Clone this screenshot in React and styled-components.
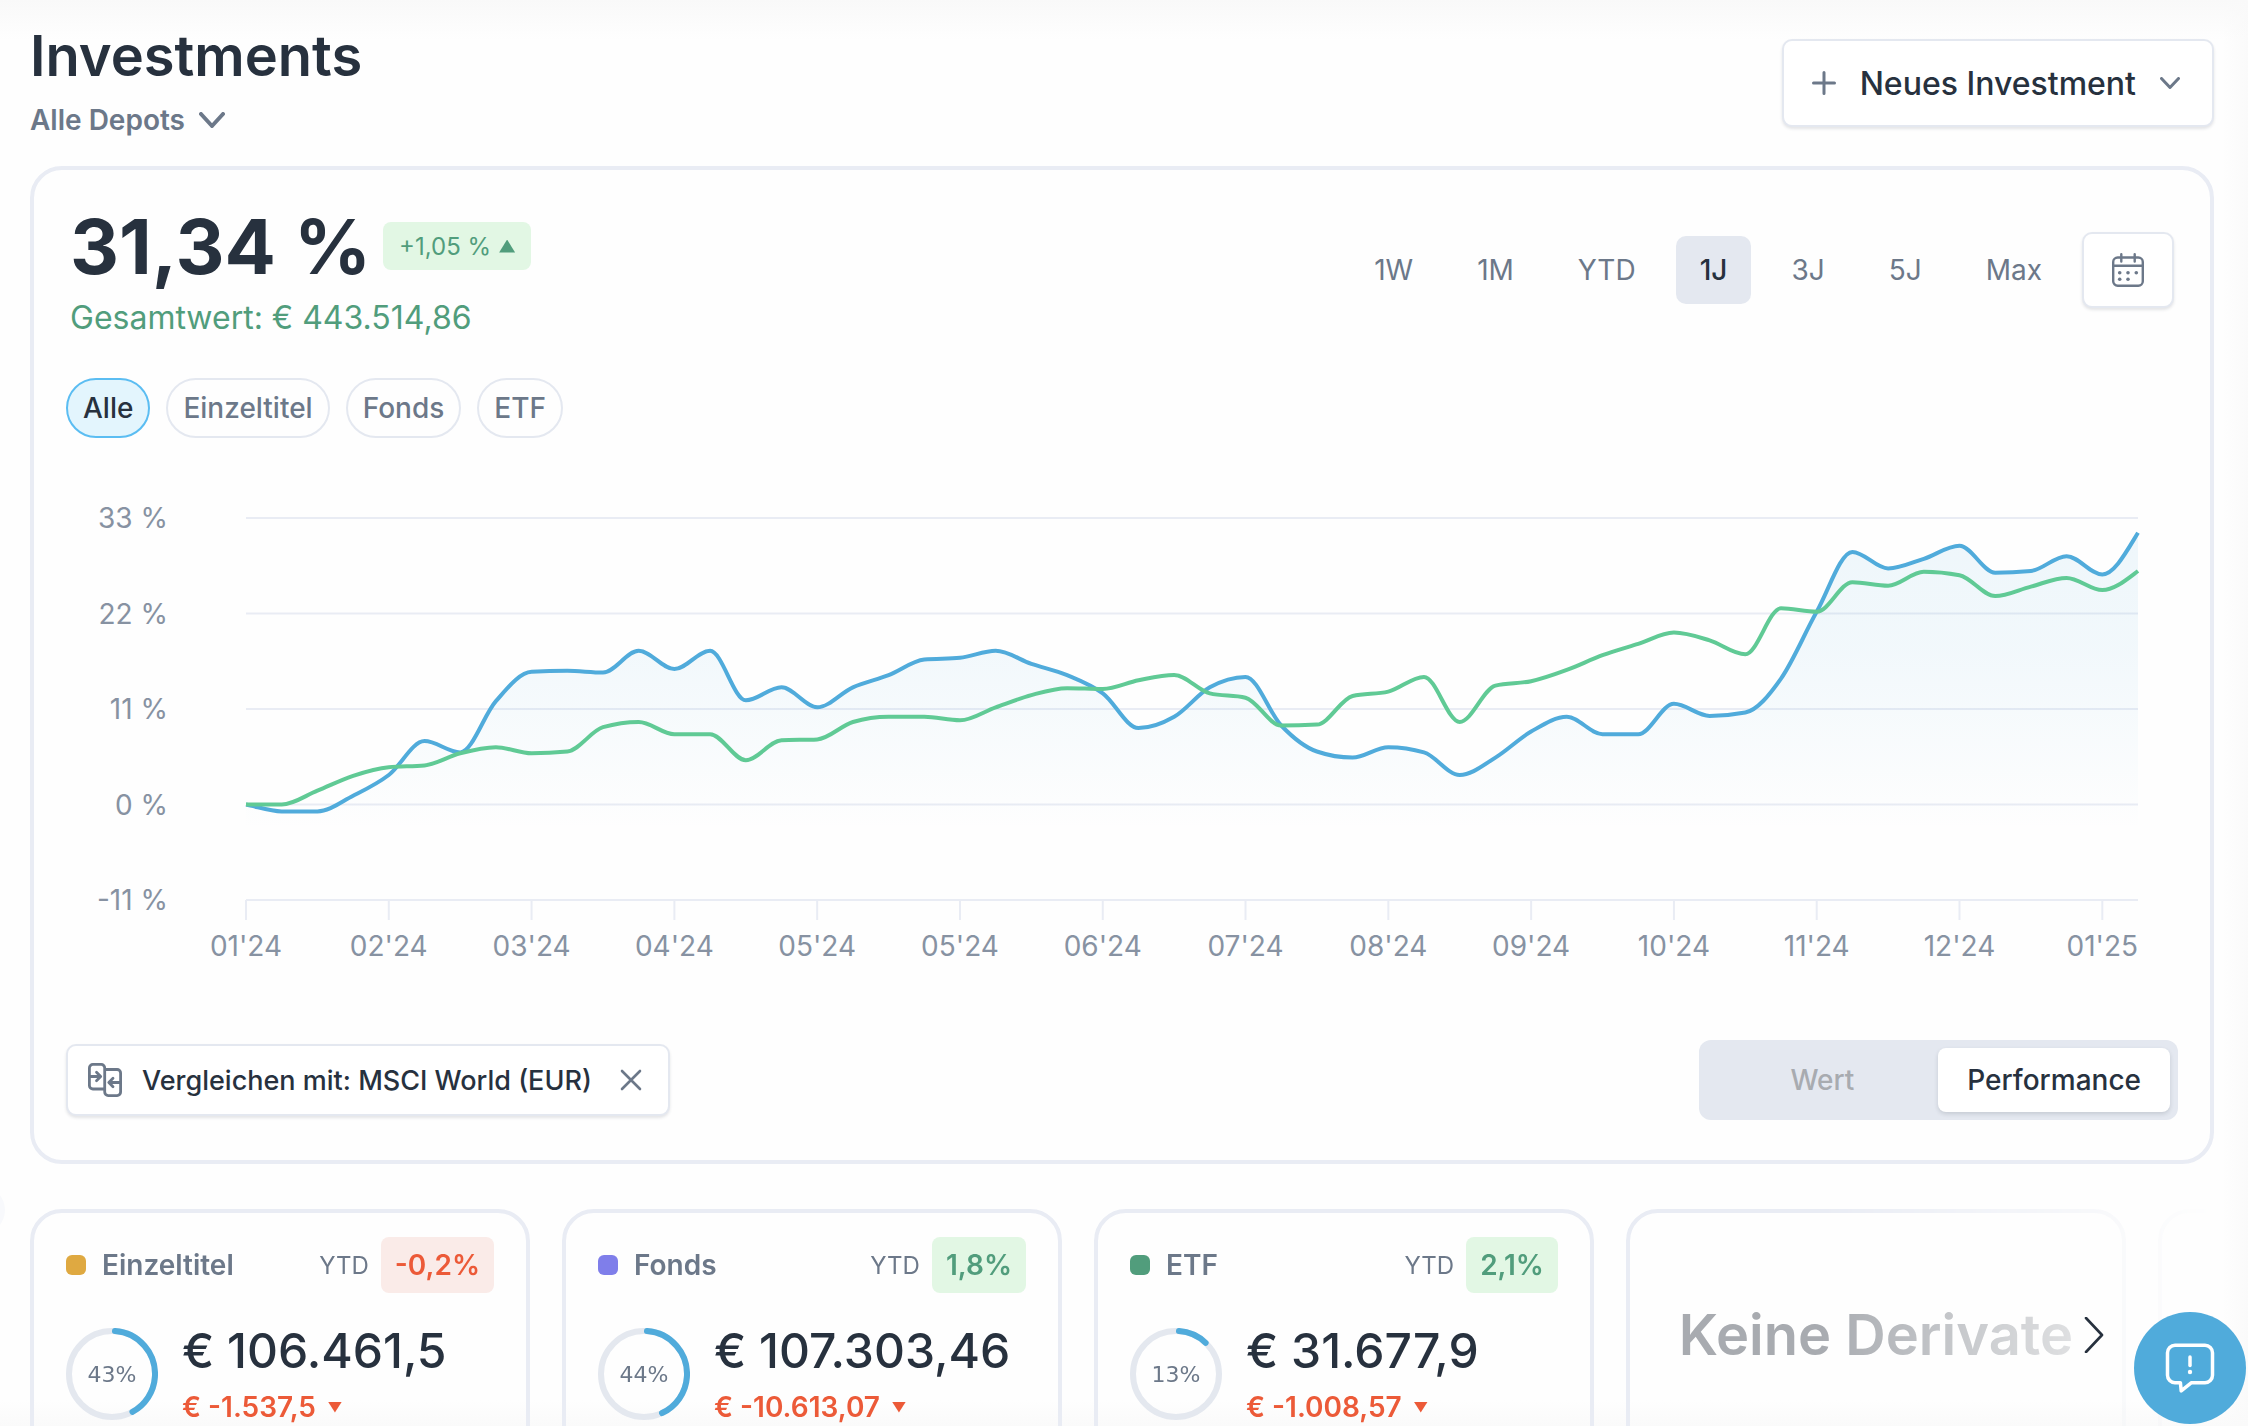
import React, { useState } from 'react';
import styled, { createGlobalStyle } from 'styled-components';

const RANGES = ['1W', '1M', 'YTD', '1J', '3J', '5J', 'Max'];
const FILTERS = ['Alle', 'Einzeltitel', 'Fonds', 'ETF'];
const MODES = ['Wert', 'Performance'];

const ASSETS = [
  { name: 'Einzeltitel', color: '#dfa941', ytd: '-0,2%', share: 43, value: '€ 106.461,5', change: '€ -1.537,5' },
  { name: 'Fonds', color: '#7f7eea', ytd: '1,8%', share: 44, value: '€ 107.303,46', change: '€ -10.613,07' },
  { name: 'ETF', color: '#519d7c', ytd: '2,1%', share: 13, value: '€ 31.677,9', change: '€ -1.008,57' },
];

// Weekly performance in percent
const PORTFOLIO = [
  0, -0.8, -0.8, 1, 3.4, 7.3, 6, 11.9, 15.3, 15.4, 15.2, 17.7, 15.6, 17.7, 12, 13.5, 11.2, 13.5,
  14.9, 16.7, 16.9, 17.7, 16.2, 14.9, 12.8, 8.8, 10.1, 13.5, 14.7, 9.1, 6.1, 5.4, 6.6, 6, 3.4, 5.4,
  8.4, 10.1, 8.1, 8.1, 11.6, 10.2, 10.6, 14.5, 22.2, 29.1, 27.2, 28.3, 29.8, 26.7, 26.9, 28.6, 26.5, 31.3,
];

const BENCHMARK = [
  0, 0, 1.6, 3.3, 4.3, 4.5, 5.9, 6.6, 5.9, 6.1, 8.9, 9.5, 8.1, 8.1, 5.1, 7.4, 7.5, 9.5,
  10.1, 10.1, 9.7, 11.2, 12.6, 13.4, 13.3, 14.3, 14.9, 12.8, 12.3, 9.1, 9.2, 12.5, 13, 14.7, 9.5, 13.7,
  14.2, 15.5, 17.2, 18.5, 19.8, 18.9, 17.3, 22.6, 22.2, 25.6, 25.2, 26.8, 26.4, 24, 25.1, 26.1, 24.7, 26.9,
];

const MONTHS = [
  "01'24", "02'24", "03'24", "04'24", "05'24", "05'24", "06'24",
  "07'24", "08'24", "09'24", "10'24", "11'24", "12'24", "01'25",
];

const PLOT = { left: 180, right: 2072, top: 40, bottom: 422 };
const STEP = (PLOT.right - PLOT.left) / (PORTFOLIO.length - 1);
const toX = (i) => PLOT.left + i * STEP;
const toY = (v) => PLOT.top + ((33 - v) / 44) * (PLOT.bottom - PLOT.top);

// Monotone cubic interpolation, so the line never overshoots a data point
function linePath(values) {
  const ys = values.map(toY);
  const slopes = ys.slice(1).map((y, i) => (y - ys[i]) / STEP);
  const tangents = ys.map((_, i) => {
    const a = slopes[i - 1];
    const b = slopes[i];
    if (a === undefined) return b;
    if (b === undefined) return a * 1.4;
    if (a * b <= 0) return 0;
    return Math.sign(a) * Math.min(Math.abs(a), Math.abs(b), Math.abs(a + b) / 4) * 2;
  });
  return ys.reduce((path, y, i) => {
    if (i === 0) return `M${toX(0)} ${y.toFixed(1)}`;
    const third = STEP / 3;
    const c1 = ys[i - 1] + tangents[i - 1] * third;
    const c2 = y - tangents[i] * third;
    return `${path}C${(toX(i - 1) + third).toFixed(1)} ${c1.toFixed(1)} ${(toX(i) - third).toFixed(1)} ${c2.toFixed(1)} ${toX(i).toFixed(1)} ${y.toFixed(1)}`;
  }, '');
}

function App() {
  const [range, setRange] = useState('1J');
  const [filter, setFilter] = useState('Alle');
  const [mode, setMode] = useState('Performance');

  return (
    <>
      <GlobalStyle />
      <Page>
        <SidebarHandle />
        <Header>
          <div>
            <Title>Investments</Title>
            <DepotButton>
              Alle Depots
              <Chevron width={26} height={16} weight={4} />
            </DepotButton>
          </div>
          <NewButton>
            <PlusIcon />
            Neues Investment
            <Chevron width={20} height={12} weight={3} />
          </NewButton>
        </Header>

        <MainCard>
          <Toolbar>
            <div>
              <PerformanceRow>
                <Performance>31,34 %</Performance>
                <ChangeBadge>
                  +1,05 %
                  <Triangle $size={16} $up />
                </ChangeBadge>
              </PerformanceRow>
              <Total>Gesamtwert: € 443.514,86</Total>
            </div>
            <RangeList>
              {RANGES.map((item) => (
                <RangeButton key={item} $active={item === range} onClick={() => setRange(item)}>
                  {item}
                </RangeButton>
              ))}
              <CalendarButton aria-label="Zeitraum wählen">
                <CalendarIcon />
              </CalendarButton>
            </RangeList>
          </Toolbar>

          <FilterList>
            {FILTERS.map((item) => (
              <FilterChip key={item} $active={item === filter} onClick={() => setFilter(item)}>
                {item}
              </FilterChip>
            ))}
          </FilterList>

          <PerformanceChart />

          <CardFooter>
            <CompareButton>
              <CompareIcon />
              Vergleichen mit: MSCI World (EUR)
              <CloseIcon />
            </CompareButton>
            <Toggle>
              {MODES.map((item) => (
                <ToggleButton key={item} $active={item === mode} onClick={() => setMode(item)}>
                  {item}
                </ToggleButton>
              ))}
            </Toggle>
          </CardFooter>
        </MainCard>

        <AssetSection>
          <AssetList>
            {ASSETS.map((asset) => (
              <AssetCard key={asset.name}>
                <AssetHeader>
                  <AssetDot $color={asset.color} />
                  <AssetName>{asset.name}</AssetName>
                  <AssetPeriod>YTD</AssetPeriod>
                  <YtdBadge $negative={asset.ytd.startsWith('-')}>{asset.ytd}</YtdBadge>
                </AssetHeader>
                <AssetBody>
                  <ShareRing share={asset.share} />
                  <div>
                    <AssetValue>{asset.value}</AssetValue>
                    <AssetChange>
                      {asset.change}
                      <Triangle $size={14} />
                    </AssetChange>
                  </div>
                </AssetBody>
              </AssetCard>
            ))}
            <EmptyCard>Keine Derivate</EmptyCard>
            <EmptyCard />
          </AssetList>
          <NextButton aria-label="Weiter">
            <svg width="20" height="36" viewBox="0 0 20 36" fill="none" stroke="#27313e" strokeWidth="2.6" strokeLinecap="round" strokeLinejoin="round">
              <path d="M2 1l16 17L2 35" />
            </svg>
          </NextButton>
        </AssetSection>

        <FeedbackButton aria-label="Feedback">
          <FeedbackIcon />
        </FeedbackButton>
      </Page>
    </>
  );
}

function PerformanceChart() {
  const portfolio = linePath(PORTFOLIO);

  return (
    <ChartSvg viewBox="0 0 2112 502" role="img" aria-label="Performance">
      <defs>
        <linearGradient id="area" gradientUnits="userSpaceOnUse" x1="0" y1="54" x2="0" y2="352">
          <stop offset="0" stopColor="#50abdb" stopOpacity="0.09" />
          <stop offset="0.4" stopColor="#50abdb" stopOpacity="0.07" />
          <stop offset="1" stopColor="#50abdb" stopOpacity="0" />
        </linearGradient>
      </defs>
      {[33, 22, 11, 0, -11].map((value) => (
        <g key={value}>
          <line x1={PLOT.left} x2={PLOT.right} y1={toY(value)} y2={toY(value)} stroke="#e9ecf4" strokeWidth="2" />
          <AxisLabel x="102" y={toY(value) + 10} textAnchor="end">{value} %</AxisLabel>
        </g>
      ))}
      {MONTHS.map((month, i) => (
        <g key={i}>
          <line x1={toX(i * 4)} x2={toX(i * 4)} y1={PLOT.bottom} y2={PLOT.bottom + 20} stroke="#e9ecf4" strokeWidth="2" />
          <AxisLabel x={toX(i * 4)} y={PLOT.bottom + 56} textAnchor="middle">{month}</AxisLabel>
        </g>
      ))}
      <path d={`${portfolio}V${PLOT.bottom}H${PLOT.left}Z`} fill="url(#area)" />
      <path d={portfolio} fill="none" stroke="#50abdb" strokeWidth="4" strokeLinejoin="round" />
      <path d={linePath(BENCHMARK)} fill="none" stroke="#60ca95" strokeWidth="4" strokeLinejoin="round" />
    </ChartSvg>
  );
}

function ShareRing({ share }) {
  // The round caps add about one percent at each end
  return (
    <Ring>
      <svg width="92" height="92" viewBox="0 0 92 92" fill="none" strokeWidth="6">
        <circle cx="46" cy="46" r="43" stroke="#e4e8ef" />
        <circle
          cx="46"
          cy="46"
          r="43"
          stroke="#50abdb"
          strokeLinecap="round"
          pathLength="100"
          strokeDasharray={`${share - 2} 100`}
          transform="rotate(-86 46 46)"
        />
      </svg>
      <RingLabel>{share}%</RingLabel>
    </Ring>
  );
}

const Chevron = ({ width, height, weight }) => (
  <svg width={width} height={height} viewBox={`0 0 ${width} ${height}`} fill="none" stroke="#6c7889" strokeWidth={weight} strokeLinecap="round" strokeLinejoin="round">
    <path d={`M${weight / 2} ${weight / 2}L${width / 2} ${height - weight / 2}L${width - weight / 2} ${weight / 2}`} />
  </svg>
);

const PlusIcon = () => (
  <svg width="24" height="24" viewBox="0 0 24 24" stroke="#6c7889" strokeWidth="3" strokeLinecap="round">
    <path d="M12 1.5V22.5M1.5 12H22.5" />
  </svg>
);

const CloseIcon = () => (
  <svg width="22" height="22" viewBox="0 0 22 22" stroke="#6c7889" strokeWidth="2.6" strokeLinecap="round">
    <path d="M2 2L20 20M20 2L2 20" />
  </svg>
);

const CalendarIcon = () => (
  <svg width="32" height="34" viewBox="0 0 32 34" fill="none" stroke="#6c7889" strokeWidth="2.4" strokeLinecap="round">
    <rect x="1.2" y="4.5" width="29.6" height="28.2" rx="4.5" />
    <path d="M1.2 12.7H30.8M9.3 1.2V8.5M22.7 1.2V8.5" />
    <g fill="#6c7889" stroke="none">
      <circle cx="7.7" cy="19.7" r="1.8" />
      <circle cx="16" cy="19.7" r="1.8" />
      <circle cx="24.3" cy="19.7" r="1.8" />
      <circle cx="7.7" cy="26.3" r="1.8" />
      <circle cx="16" cy="26.3" r="1.8" />
    </g>
  </svg>
);

const CompareIcon = () => (
  <svg width="34" height="34" viewBox="0 0 34 34" fill="none" stroke="#6c7889" strokeWidth="2.8" strokeLinecap="round" strokeLinejoin="round">
    <path d="M16.7 26H4.9A3.5 3.5 0 0 1 1.4 22.5V4.9A3.5 3.5 0 0 1 4.9 1.4H13.2A3.5 3.5 0 0 1 16.7 4.9V29.1A3.5 3.5 0 0 0 20.2 32.6H29.1A3.5 3.5 0 0 0 32.6 29.1V10A3.5 3.5 0 0 0 29.1 6.5H16.7" />
    <path d="M1.4 13.5H12M8.5 9.3L12.7 13.5L8.5 17.7M32.6 19.5H21.5M25 15.3L20.8 19.5L25 23.7" />
  </svg>
);

const FeedbackIcon = () => (
  <svg width="50" height="50" viewBox="0 0 50 50" fill="none" stroke="#ffffff" strokeWidth="3.5" strokeLinecap="round" strokeLinejoin="round">
    <path d="M10 2.3H40A7.5 7.5 0 0 1 47.5 9.8V32.2A7.5 7.5 0 0 1 40 39.7H26.5L16.2 47.8L15.4 39.7H10A7.5 7.5 0 0 1 2.5 32.2V9.8A7.5 7.5 0 0 1 10 2.3Z" />
    <path d="M25 14V22.5" />
    <circle cx="25" cy="29" r="2.2" fill="#ffffff" stroke="none" />
  </svg>
);

const GlobalStyle = createGlobalStyle`
  * {
    box-sizing: border-box;
  }

  body {
    margin: 0;
    color: #27313e;
    font-family: Inter, 'Liberation Sans', sans-serif;
    font-size: 28px;
  }

  button {
    border: none;
    background: none;
    color: inherit;
    font: inherit;
    cursor: pointer;
  }

  svg {
    display: block;
    flex-shrink: 0;
  }
`;

const Page = styled.main`
  position: relative;
  height: 100vh;
  overflow: hidden;
  padding: 24px 34px 0 30px;
  background:
    linear-gradient(to bottom, #f9f9f9, rgba(249, 249, 249, 0) 40px),
    linear-gradient(to top, #fafafa, rgba(250, 250, 250, 0) 26px),
    linear-gradient(to left, #fafafa, rgba(250, 250, 250, 0) 26px),
    #fefefe;
`;

const SidebarHandle = styled.span`
  position: absolute;
  left: -43px;
  top: 1186px;
  width: 48px;
  height: 48px;
  border-radius: 50%;
  background: #f8f9fc;
`;

const Header = styled.header`
  display: flex;
  align-items: center;
  justify-content: space-between;
  margin-bottom: 24px;
`;

const Title = styled.h1`
  margin: 0 0 14px;
  font-size: 56px;
  font-weight: 600;
  line-height: 64px;
`;

const DepotButton = styled.button`
  display: flex;
  align-items: center;
  gap: 14px;
  padding: 0 0 4px;
  color: #6c7889;
  font-weight: 600;
  line-height: 36px;
`;

const OutlineButton = styled.button`
  display: flex;
  align-items: center;
  justify-content: center;
  border: 2px solid #e4e8f0;
  border-radius: 10px;
  background: #ffffff;
  box-shadow: 0 2px 3px rgba(39, 49, 62, 0.12);
`;

const NewButton = styled(OutlineButton)`
  gap: 24px;
  height: 88px;
  padding: 0 32px 0 28px;
  font-size: 32px;
  font-weight: 500;
`;

const MainCard = styled.section`
  padding: 32px 32px 40px;
  border: 4px solid #e9ecf4;
  border-radius: 32px;
`;

const Toolbar = styled.div`
  display: flex;
  align-items: center;
  justify-content: space-between;
  padding: 0 4px;
`;

const PerformanceRow = styled.div`
  display: flex;
  align-items: center;
  gap: 12px;
  margin-bottom: 8px;
`;

const Performance = styled.strong`
  font-size: 76px;
  font-weight: 700;
  line-height: 88px;
`;

const ChangeBadge = styled.span`
  display: flex;
  align-items: center;
  gap: 8px;
  height: 48px;
  padding: 0 16px;
  border-radius: 8px;
  background: #e2f7e4;
  color: #519d7c;
  font-size: 24px;
`;

const Triangle = styled.span`
  width: ${(props) => props.$size}px;
  height: ${(props) => props.$size - 3}px;
  background: currentColor;
  clip-path: ${(props) => (props.$up ? 'polygon(50% 0, 100% 100%, 0 100%)' : 'polygon(0 0, 100% 0, 50% 100%)')};
`;

const Total = styled.p`
  margin: 0;
  color: #519d7c;
  font-size: 32px;
  line-height: 40px;
`;

const RangeList = styled.div`
  display: flex;
  align-items: center;
  gap: 16px;
`;

const RangeButton = styled.button`
  height: 68px;
  padding: 0 24px;
  border-radius: 10px;
  background: ${(props) => (props.$active ? '#e4e8f0' : 'none')};
  color: ${(props) => (props.$active ? '#27313e' : '#6c7889')};
  font-weight: ${(props) => (props.$active ? 500 : 400)};
`;

const CalendarButton = styled(OutlineButton)`
  width: 92px;
  height: 76px;
`;

const FilterList = styled.div`
  display: flex;
  gap: 16px;
  margin: 40px 0;
`;

const FilterChip = styled.button`
  height: 60px;
  padding: 0 15px;
  border: 2px solid ${(props) => (props.$active ? '#5bbdf2' : '#e4e8f0')};
  border-radius: 30px;
  background: ${(props) => (props.$active ? '#e3f5fd' : 'none')};
  color: ${(props) => (props.$active ? '#27313e' : '#6c7889')};
  font-weight: 500;
`;

const ChartSvg = styled.svg`
  width: 100%;
`;

const AxisLabel = styled.text`
  fill: #8792a2;
  font-size: 28px;
`;

const CardFooter = styled.div`
  display: flex;
  align-items: center;
  justify-content: space-between;
  margin-top: 60px;
`;

const CompareButton = styled(OutlineButton)`
  gap: 20px;
  height: 72px;
  padding: 0 26px 0 20px;
  font-size: 27px;
  font-weight: 500;

  svg:last-child {
    margin-left: 8px;
  }
`;

const Toggle = styled.div`
  display: grid;
  grid-template-columns: 1fr 1fr;
  padding: 8px;
  border-radius: 12px;
  background: #e4e8f0;
`;

const ToggleButton = styled.button`
  height: 64px;
  padding: 0 29px;
  border-radius: 8px;
  background: ${(props) => (props.$active ? '#ffffff' : 'none')};
  box-shadow: ${(props) => (props.$active ? '0 2px 4px rgba(39, 49, 62, 0.16)' : 'none')};
  color: ${(props) => (props.$active ? '#27313e' : '#a8abb0')};
  font-weight: 500;
`;

const AssetSection = styled.section`
  position: relative;
  margin-top: 45px;
`;

const AssetList = styled.div`
  display: flex;
  gap: 32px;
  overflow: hidden;
  mask-image: linear-gradient(to right, #000 82%, transparent);
`;

const AssetCard = styled.article`
  flex: 0 0 500px;
  padding: 24px 32px 32px;
  border: 4px solid #e9ecf4;
  border-radius: 32px;
`;

const EmptyCard = styled(AssetCard)`
  display: flex;
  align-items: center;
  justify-content: center;
  padding: 24px 32px;
  color: #a8abb0;
  font-size: 56px;
  font-weight: 600;
  white-space: nowrap;
`;

const AssetHeader = styled.header`
  display: flex;
  align-items: center;
  margin-bottom: 30px;
`;

const AssetDot = styled.span`
  width: 20px;
  height: 20px;
  margin-right: 16px;
  border-radius: 6px;
  background: ${(props) => props.$color};
`;

const AssetName = styled.span`
  flex: 1;
  color: #6c7889;
  font-weight: 600;
`;

const AssetPeriod = styled.span`
  margin-right: 12px;
  color: #6c7889;
  font-size: 24px;
`;

const YtdBadge = styled.span`
  padding: 0 14px;
  border-radius: 8px;
  background: ${(props) => (props.$negative ? '#faebe8' : '#e2f7e4')};
  color: ${(props) => (props.$negative ? '#ec5a38' : '#519d7c')};
  font-weight: 600;
  line-height: 56px;
`;

const AssetBody = styled.div`
  display: flex;
  align-items: center;
  gap: 24px;
`;

const Ring = styled.div`
  display: grid;
  place-items: center;

  > * {
    grid-area: 1 / 1;
  }
`;

const RingLabel = styled.span`
  color: #6c7889;
  font-family: 'DejaVu Sans', sans-serif;
  font-size: 22px;
`;

const AssetValue = styled.div`
  margin-bottom: 10px;
  font-size: 48px;
  font-weight: 500;
  line-height: 56px;
`;

const AssetChange = styled.div`
  display: flex;
  align-items: center;
  gap: 12px;
  color: #ec5a38;
  font-weight: 600;
  line-height: 36px;
`;

const NextButton = styled.button`
  position: absolute;
  top: 50%;
  right: 110px;
  padding: 0;
  transform: translateY(-50%);
`;

const FeedbackButton = styled.button`
  position: fixed;
  right: 2px;
  bottom: 2px;
  display: flex;
  align-items: center;
  justify-content: center;
  width: 112px;
  height: 112px;
  border-radius: 50%;
  background: #50abdb;
`;

export default App;
